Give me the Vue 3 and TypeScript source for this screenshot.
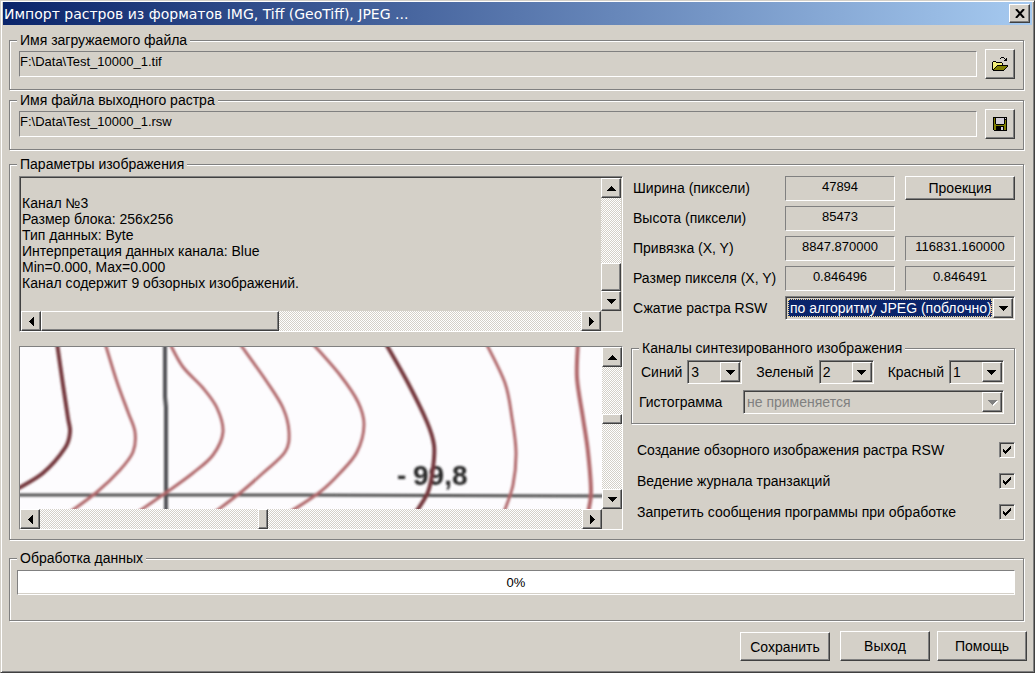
<script setup lang="ts">
import { ref } from 'vue'

type Point = [number, number]

interface Contour {
  tone: 'major' | 'minor'
  width: number
  points: Point[]
}

const sourceFile = ref('F:\\Data\\Test_10000_1.tif')
const targetFile = ref('F:\\Data\\Test_10000_1.rsw')

const info = ref(
  [
    '',
    'Канал №3',
    'Размер блока: 256x256',
    'Тип данных: Byte',
    'Интерпретация данных канала: Blue',
    'Min=0.000, Max=0.000',
    'Канал содержит 9 обзорных изображений.',
  ].join('\n'),
)

const parameters = [
  { id: 'width', label: 'Ширина (пиксели)', values: ['47894'] },
  { id: 'height', label: 'Высота (пиксели)', values: ['85473'] },
  { id: 'origin', label: 'Привязка (X, Y)', values: ['8847.870000', '116831.160000'] },
  { id: 'pixel', label: 'Размер пикселя (X, Y)', values: ['0.846496', '0.846491'] },
]

const compression = ref('по алгоритму JPEG (поблочно)')
const histogram = ref('не применяется')

const channels = ref([
  { id: 'blue', label: 'Синий', value: '3' },
  { id: 'green', label: 'Зеленый', value: '2' },
  { id: 'red', label: 'Красный', value: '1' },
])

const options = ref([
  { id: 'overview', label: 'Создание обзорного изображения растра RSW', checked: true },
  { id: 'journal', label: 'Ведение журнала транзакций', checked: true },
  { id: 'silent', label: 'Запретить сообщения программы при обработке', checked: true },
])

const progress = ref(0)

const contours: Contour[] = [
  { tone: 'major', width: 4, points: [[37, -4], [43, 38], [48, 71], [50, 85], [45, 101], [23, 126], [-3, 142]] },
  { tone: 'minor', width: 3, points: [[85, -4], [97, 35], [108, 65], [115, 85], [113, 105], [100, 123], [77, 145], [50, 165]] },
  { tone: 'minor', width: 3, points: [[150, -3], [163, 20], [183, 41], [197, 61], [203, 85], [193, 108], [173, 126], [147, 145], [118, 165]] },
  { tone: 'minor', width: 3, points: [[220, -3], [247, 35], [263, 61], [269, 85], [265, 105], [243, 126], [220, 146], [195, 165]] },
  { tone: 'minor', width: 3, points: [[293, -3], [320, 28], [338, 55], [344, 78], [337, 105], [320, 126], [300, 145], [270, 165]] },
  { tone: 'major', width: 4, points: [[366, -3], [388, 36], [407, 75], [414, 98], [413, 121], [408, 145], [396, 165]] },
  { tone: 'minor', width: 3, points: [[466, -4], [485, 36], [492, 71], [496, 105], [493, 138], [484, 165]] },
  { tone: 'minor', width: 4, points: [[558, -4], [557, 31], [563, 71], [568, 105], [571, 145], [568, 166]] },
]

// Catmull-Rom spline through the points, written as cubic segments.
function spline(points: Point[]): string {
  let d = `M${points[0][0]} ${points[0][1]}`
  for (let i = 0; i < points.length - 1; i++) {
    const a = points[Math.max(i - 1, 0)]
    const b = points[i]
    const c = points[i + 1]
    const e = points[Math.min(i + 2, points.length - 1)]
    d += ` C${b[0] + (c[0] - a[0]) / 6} ${b[1] + (c[1] - a[1]) / 6}`
    d += ` ${c[0] - (e[0] - b[0]) / 6} ${c[1] - (e[1] - b[1]) / 6} ${c[0]} ${c[1]}`
  }
  return d
}
</script>

<template>
  <main class="window">
    <header class="titlebar">
      <h1>Импорт растров из форматов IMG, Tiff (GeoTiff), JPEG ...</h1>
      <button class="btn close" type="button" aria-label="Закрыть">
        <svg width="10" height="9" viewBox="0 0 10 9">
          <path d="M1 0L9 9M9 0L1 9" fill="none" stroke="#000" stroke-width="2" />
        </svg>
      </button>
    </header>

    <div class="body">
      <fieldset class="group file">
        <legend>Имя загружаемого файла</legend>
        <div class="file-row">
          <input v-model="sourceFile" class="field path" type="text" readonly aria-label="Имя загружаемого файла" />
          <button class="btn tool" type="button" aria-label="Открыть">
            <svg width="16" height="14" viewBox="0 0 16 14" shape-rendering="crispEdges">
              <path fill="#f4f07a" d="M1 5h3v1h6v3H6v1H5v1H4v1H3v1H1z" />
              <path fill="#808000" d="M5 9h10v1h-1v1h-1v1h-1v1H2v-1h1v-1h1v-1h1z" />
              <path d="M1 4h3v1H1zM0 5h1v8H0zM4 5h6v1H4zM10 6h1v2h-1zM5 8h11v1H5zM4 9h1v1H4zM3 10h1v1H3zM2 11h1v1H2zM1 12h1v1H1zM1 13h11v1H1zM12 12h1v1h-1zM13 11h1v1h-1zM14 10h1v1h-1zM15 9h1v1h-1zM8 1h1v1H8zM9 0h3v1H9zM12 1h1v1h-1zM13 2h1v1h-1zM14 1h1v3h-3V3h2z" />
            </svg>
          </button>
        </div>
      </fieldset>

      <fieldset class="group file">
        <legend>Имя файла выходного растра</legend>
        <div class="file-row">
          <input v-model="targetFile" class="field path" type="text" readonly aria-label="Имя файла выходного растра" />
          <button class="btn tool" type="button" aria-label="Сохранить как">
            <svg width="14" height="14" viewBox="0 0 14 14" shape-rendering="crispEdges">
              <path d="M0 0h14v14H1v-1H0z" />
              <path fill="#808000" d="M1 1h1v6h1v1h8V7h1V3h1v10h-2V9H3v4H1z" />
              <path fill="#d4d0d8" d="M3 1h8v6H3zM12 1h1v1h-1zM8 10h2v3H8z" />
            </svg>
          </button>
        </div>
      </fieldset>

      <fieldset class="group image">
        <legend>Параметры изображения</legend>
        <div class="columns">
          <div class="left">
            <div class="memo">
              <textarea v-model="info" readonly wrap="off" aria-label="Параметры изображения"></textarea>
              <div class="vbar">
                <button class="btn arrow" type="button" aria-label="Вверх">
                  <svg width="9" height="5" viewBox="0 0 9 5" shape-rendering="crispEdges"><path d="M4 0h1v1h1v1h1v1h1v1h1v1H0V4h1V3h1V2h1V1h1z" /></svg>
                </button>
                <div class="track"></div>
                <div class="thumb info-v"></div>
                <button class="btn arrow" type="button" aria-label="Вниз">
                  <svg width="9" height="5" viewBox="0 0 9 5" shape-rendering="crispEdges"><path d="M0 0h9v1H8v1H7v1H6v1H5v1H4V4H3V3H2V2H1V1H0z" /></svg>
                </button>
              </div>
              <div class="hbar">
                <button class="btn arrow" type="button" aria-label="Влево">
                  <svg width="5" height="9" viewBox="0 0 5 9" shape-rendering="crispEdges"><path d="M0 4h1V3h1V2h1V1h1V0h1v9H4V8H3V7H2V6H1V5H0z" /></svg>
                </button>
                <div class="thumb info-h"></div>
                <div class="track"></div>
                <button class="btn arrow" type="button" aria-label="Вправо">
                  <svg width="5" height="9" viewBox="0 0 5 9" shape-rendering="crispEdges"><path d="M0 0h1v1h1v1h1v1h1v1h1v1H4v1H3v1H2v1H1v1H0z" /></svg>
                </button>
              </div>
            </div>

            <div class="preview">
              <svg class="map" viewBox="0 0 582 162" preserveAspectRatio="xMinYMin slice" role="img" aria-label="Фрагмент карты">
                <defs>
                  <filter id="scan" x="-5%" y="-5%" width="110%" height="110%">
                    <feGaussianBlur stdDeviation="0.8" />
                  </filter>
                </defs>
                <rect width="582" height="162" fill="#fdfcfe" />
                <g filter="url(#scan)" fill="none">
                  <path d="M145 -4V50L146 60V166" stroke="#505052" stroke-width="4" />
                  <path d="M-4 148H280L586 149" stroke="#505050" stroke-width="3" />
                  <text class="mark" x="377" y="138">-</text>
                  <text class="mark" x="393" y="138">99,8</text>
                  <path
                    v-for="(line, i) in contours"
                    :key="i"
                    :class="line.tone"
                    :stroke-width="line.width"
                    :d="spline(line.points)"
                  />
                </g>
              </svg>
              <div class="vbar">
                <button class="btn arrow" type="button" aria-label="Вверх">
                  <svg width="9" height="5" viewBox="0 0 9 5" shape-rendering="crispEdges"><path d="M4 0h1v1h1v1h1v1h1v1h1v1H0V4h1V3h1V2h1V1h1z" /></svg>
                </button>
                <div class="track map-above"></div>
                <div class="thumb map-v"></div>
                <div class="track map-below"></div>
                <button class="btn arrow" type="button" aria-label="Вниз">
                  <svg width="9" height="5" viewBox="0 0 9 5" shape-rendering="crispEdges"><path d="M0 0h9v1H8v1H7v1H6v1H5v1H4V4H3V3H2V2H1V1H0z" /></svg>
                </button>
              </div>
              <div class="hbar">
                <button class="btn arrow" type="button" aria-label="Влево">
                  <svg width="5" height="9" viewBox="0 0 5 9" shape-rendering="crispEdges"><path d="M0 4h1V3h1V2h1V1h1V0h1v9H4V8H3V7H2V6H1V5H0z" /></svg>
                </button>
                <div class="track map-before"></div>
                <div class="thumb map-h"></div>
                <div class="track map-after"></div>
                <button class="btn arrow" type="button" aria-label="Вправо">
                  <svg width="5" height="9" viewBox="0 0 5 9" shape-rendering="crispEdges"><path d="M0 0h1v1h1v1h1v1h1v1h1v1H4v1H3v1H2v1H1v1H0z" /></svg>
                </button>
              </div>
            </div>
          </div>

          <div class="right">
            <div class="params">
              <template v-for="row in parameters" :key="row.id">
                <label :for="row.id">{{ row.label }}</label>
                <input :id="row.id" class="field number" type="text" readonly :value="row.values[0]" />
                <button v-if="row.id === 'width'" class="btn projection" type="button">Проекция</button>
                <input
                  v-else-if="row.values.length > 1"
                  class="field number"
                  type="text"
                  readonly
                  :value="row.values[1]"
                  :aria-label="row.label"
                />
                <span v-else></span>
              </template>
              <label for="compression">Сжатие растра RSW</label>
              <span class="combo focused">
                <select id="compression" v-model="compression">
                  <option>по алгоритму JPEG (поблочно)</option>
                </select>
                <span class="drop"><svg width="9" height="5" viewBox="0 0 9 5" shape-rendering="crispEdges"><path d="M0 0h9v1H8v1H7v1H6v1H5v1H4V4H3V3H2V2H1V1H0z" /></svg></span>
              </span>
            </div>

            <fieldset class="group channels">
              <legend>Каналы синтезированного изображения</legend>
              <div class="channel-row">
                <div v-for="channel in channels" :key="channel.id" class="channel">
                  <label :for="channel.id">{{ channel.label }}</label>
                  <span class="combo">
                    <select :id="channel.id" v-model="channel.value">
                      <option>1</option>
                      <option>2</option>
                      <option>3</option>
                    </select>
                    <span class="drop"><svg width="9" height="5" viewBox="0 0 9 5" shape-rendering="crispEdges"><path d="M0 0h9v1H8v1H7v1H6v1H5v1H4V4H3V3H2V2H1V1H0z" /></svg></span>
                  </span>
                </div>
              </div>
              <div class="histogram-row">
                <label for="histogram">Гистограмма</label>
                <span class="combo disabled">
                  <select id="histogram" v-model="histogram" disabled>
                    <option>не применяется</option>
                  </select>
                  <span class="drop"><svg width="9" height="5" viewBox="0 0 9 5" shape-rendering="crispEdges"><path d="M0 0h9v1H8v1H7v1H6v1H5v1H4V4H3V3H2V2H1V1H0z" /></svg></span>
                </span>
              </div>
            </fieldset>

            <div class="options">
              <div v-for="option in options" :key="option.id" class="option">
                <label :for="option.id">{{ option.label }}</label>
                <span class="check">
                  <input :id="option.id" v-model="option.checked" type="checkbox" />
                  <svg v-if="option.checked" class="tick" width="8" height="8" viewBox="0 0 8 8" shape-rendering="crispEdges">
                    <path d="M7 0h1v3H7v1H6v1H5v1H4v1H3v1H2V7H1V6H0V3h1v1h1v1h1V4h1V3h1V2h1V1h1z" />
                  </svg>
                </span>
              </div>
            </div>
          </div>
        </div>
      </fieldset>

      <fieldset class="group processing">
        <legend>Обработка данных</legend>
        <div class="progress" role="progressbar" aria-label="Обработка данных" aria-valuemin="0" aria-valuemax="100" :aria-valuenow="progress">
          {{ progress }}%
        </div>
      </fieldset>

      <footer class="actions">
        <button class="btn save" type="button">Сохранить</button>
        <button class="btn" type="button">Выход</button>
        <button class="btn" type="button">Помощь</button>
      </footer>
    </div>
  </main>
</template>

<style>
body {
  margin: 0;
  background: #d4d0c8;
}
</style>

<style scoped>
.window,
.window * {
  box-sizing: border-box;
}

.window {
  --face: #d4d0c8;
  --grey: #808080;
  --dark: #404040;
  display: flex;
  flex-direction: column;
  min-width: 960px;
  min-height: 100vh;
  padding: 1px 2px 0 2px;
  border: 1px solid var(--face);
  border-right-color: var(--dark);
  border-bottom-color: var(--dark);
  background: var(--face);
  box-shadow: inset 1px 1px 0 #fff, inset -1px -1px 0 var(--grey);
  color: #000;
  font: 14px/16px "Liberation Sans", Arial, sans-serif;
}

button,
input,
select,
textarea {
  margin: 0;
  color: inherit;
  font: inherit;
  border-radius: 0;
  outline: 0;
}

.titlebar {
  display: flex;
  align-items: center;
  justify-content: space-between;
  height: 23px;
  padding: 0 2px 0 1px;
  background: linear-gradient(90deg, #0a246a, #a6caf0);
}

.titlebar h1 {
  margin: 0;
  color: #fff;
  font: 14px/20px "DejaVu Sans", Verdana, sans-serif;
  white-space: nowrap;
}

.btn {
  display: flex;
  align-items: center;
  justify-content: center;
  padding: 0;
  border: 1px solid #fff;
  border-right-color: var(--dark);
  border-bottom-color: var(--dark);
  background: var(--face);
  box-shadow: inset -1px -1px 0 var(--grey);
}

.close {
  width: 21px;
  height: 19px;
}

.body {
  display: flex;
  flex-direction: column;
  padding: 7px 8px 0 6px;
}

.group {
  min-width: 0;
  margin: 0;
  padding: 0;
  border: 1px solid var(--grey);
  box-shadow: 1px 1px 0 #fff, inset 1px 1px 0 #fff;
}

.group legend {
  height: 16px;
  margin-left: 7px;
  padding: 0 3px;
  background: var(--face);
  white-space: nowrap;
}

.file {
  margin-bottom: 2px;
  padding-bottom: 10px;
}

.file-row {
  display: flex;
  align-items: center;
  gap: 8px;
  padding: 1px 8px 0 9px;
}

.field {
  height: 26px;
  border: 1px solid var(--grey);
  border-right-color: #fff;
  border-bottom-color: #fff;
  background: var(--face);
  font-size: 13px;
}

.path {
  flex: 1;
  min-width: 0;
  padding: 0 0 5px 0;
}

.tool {
  width: 30px;
  height: 30px;
}

.image {
  margin: 4px 0 10px;
  padding-bottom: 9px;
}

.columns {
  display: grid;
  grid-template-columns: minmax(0, 1fr) 384px;
  gap: 8px;
  padding: 4px 8px 0 9px;
}

.left {
  display: flex;
  flex-direction: column;
  gap: 14px;
}

.memo,
.preview {
  display: grid;
  grid-template-columns: minmax(0, 1fr) 20px;
  border: 1px solid var(--grey);
  border-right-color: #fff;
  border-bottom-color: #fff;
}

.memo {
  grid-template-rows: 133px 20px;
  padding: 1px 1px 0 1px;
  box-shadow: inset 1px 1px 0 var(--dark);
}

.memo textarea {
  display: block;
  height: 133px;
  padding: 1px 0 0 1px;
  border: 0;
  background: transparent;
  overflow: hidden;
  resize: none;
  white-space: pre;
}

.preview {
  grid-template-rows: 162px 20px;
}

.map {
  display: block;
  width: 100%;
  height: 162px;
}

.major {
  stroke: #74383c;
}

.minor {
  stroke: #b0686b;
}

.mark {
  fill: #262626;
  font: bold 28px "Liberation Sans", Arial, sans-serif;
}

.vbar,
.hbar {
  display: flex;
}

.vbar {
  flex-direction: column;
}

.arrow,
.drop {
  flex: none;
  width: 20px;
  height: 20px;
}

.track {
  flex: 1;
  background: repeating-conic-gradient(#fff 0 25%, var(--face) 0 50%) 0 0 / 2px 2px;
}

.thumb {
  flex: none;
  border: 1px solid #fff;
  border-right-color: var(--dark);
  border-bottom-color: var(--dark);
  background: var(--face);
  box-shadow: inset -1px -1px 0 var(--grey);
}

.info-v {
  height: 28px;
}

.info-h {
  width: 238px;
}

.map-v {
  height: 10px;
}

.map-h {
  width: 10px;
}

.map-before {
  flex: 218;
}

.map-after {
  flex: 314;
}

.map-above {
  flex: 47;
}

.map-below {
  flex: 65;
}

.right {
  display: flex;
  flex-direction: column;
}

.params {
  display: grid;
  grid-template-columns: minmax(0, 1fr) 110px 110px;
  column-gap: 10px;
  row-gap: 5px;
  padding-left: 2px;
}

.params label {
  padding-top: 4px;
  white-space: nowrap;
}

.number {
  width: 100%;
  height: 25px;
  padding: 0 0 5px;
  text-align: center;
}

.projection {
  height: 24px;
}

.combo {
  display: flex;
  position: relative;
  height: 24px;
  padding: 1px;
  border: 1px solid var(--grey);
  border-right-color: #fff;
  border-bottom-color: #fff;
  box-shadow: inset 1px 1px 0 var(--dark);
}

.combo select {
  flex: 1;
  min-width: 0;
  padding: 0 0 0 2px;
  border: 0;
  background: transparent;
  appearance: none;
}

.drop {
  display: flex;
  align-items: center;
  justify-content: center;
  position: absolute;
  top: 1px;
  right: 1px;
  bottom: 1px;
  height: auto;
  border: 1px solid #fff;
  border-right-color: var(--dark);
  border-bottom-color: var(--dark);
  background: var(--face);
  box-shadow: inset -1px -1px 0 var(--grey);
  pointer-events: none;
}

.focused {
  grid-column: 2 / 4;
}

.params .focused {
  padding: 2px 22px 2px 2px;
}

.focused select {
  padding-left: 1px;
  border: 1px dotted #f5db95;
  background: #0a246a;
  color: #fff;
}

.disabled select {
  color: var(--grey);
  opacity: 1;
}

.disabled .drop svg {
  fill: var(--grey);
  filter: drop-shadow(1px 1px 0 #fff);
}

.channels {
  margin-top: 20px;
  padding-bottom: 9px;
}

.channel-row {
  display: flex;
  justify-content: space-between;
  padding: 4px 10px 0 9px;
}

.channel {
  display: flex;
  align-items: center;
  gap: 5px;
}

.channel .combo {
  width: 55px;
}

.histogram-row {
  display: flex;
  align-items: center;
  justify-content: space-between;
  padding: 6px 10px 0 7px;
}

.histogram-row .combo {
  width: 261px;
}

.options {
  display: flex;
  flex-direction: column;
  gap: 15px;
  padding: 18px 0 0 6px;
}

.option {
  display: flex;
  align-items: center;
  justify-content: space-between;
}

.option label {
  white-space: nowrap;
}

.check {
  display: grid;
  position: relative;
  width: 16px;
  height: 16px;
}

.check input {
  width: 16px;
  height: 16px;
  border: 1px solid var(--grey);
  border-right-color: #fff;
  border-bottom-color: #fff;
  background: var(--face);
  box-shadow: inset 1px 1px 0 var(--dark);
  appearance: none;
}

.tick {
  position: absolute;
  top: 4px;
  left: 4px;
  pointer-events: none;
}

.processing {
  padding-bottom: 25px;
}

.progress {
  height: 25px;
  margin: 4px 8px 0 7px;
  border: 1px solid var(--grey);
  border-right-color: #fff;
  border-bottom-color: #fff;
  background: #fff;
  box-shadow: inset 0 -1px 0 var(--face);
  font-size: 13px;
  line-height: 23px;
  text-align: center;
}

.actions {
  display: flex;
  align-items: flex-end;
  justify-content: flex-end;
  gap: 7px;
  padding-top: 10px;
  margin-right: -3px;
}

.actions .btn {
  width: 90px;
  height: 30px;
}

.actions .save {
  margin-right: 3px;
  height: 29px;
}
</style>
